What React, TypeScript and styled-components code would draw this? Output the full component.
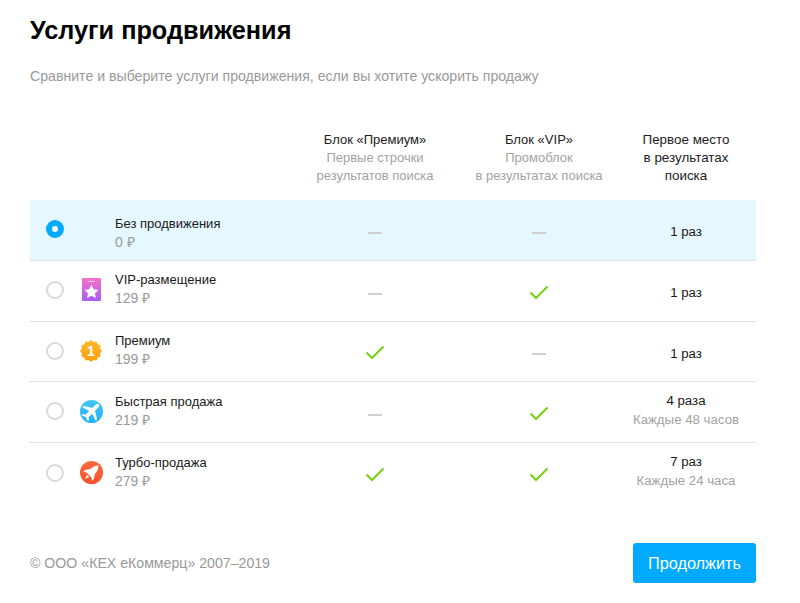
import React from "react";
import styled, { createGlobalStyle } from "styled-components";

const Global = createGlobalStyle`
  html, body { margin: 0; padding: 0; background: #fff; }
  body { font-family: "Liberation Sans", Arial, sans-serif; color: #000; }
`;

const Page = styled.div`
  width: 726px;
  height: 603px;
  padding: 0 44px 0 30px;
  display: flex;
  flex-direction: column;
  overflow: hidden;
`;
const Title = styled.h1`
  margin: 15px 0 0;
  font-size: 25.3px;
  line-height: 30px;
  font-weight: 700;
  color: #000;
`;
const Subtitle = styled.p`
  margin: 22px 0 0;
  font-size: 14.14px;
  line-height: 18px;
  color: #999;
`;
const Columns = "263px 164px 164px 130px 5px";
const Header = styled.div`
  margin-top: 46px;
  display: grid;
  grid-template-columns: ${Columns};
  height: 69px;
  border-bottom: 1px solid #e5e5e5;
  margin-bottom: -1px;
`;
const HeadCell = styled.div<{ $wide?: boolean }>`
  text-align: center;
  font-size: ${(p) => (p.$wide ? "13.4px" : "13px")};
  line-height: 18px;
  color: #222;
`;
const HeadMuted = styled.div`
  color: #a3a3a3;
`;
const Row = styled.div<{ $active?: boolean }>`
  display: grid;
  grid-template-columns: ${Columns};
  align-items: center;
  box-sizing: border-box;
  height: 60.75px;
  border-bottom: 1px solid #e0e0e0;
  background: ${(p) => (p.$active ? "#e5f7ff" : "#fff")};
  &:last-child { border-bottom: none; }
`;
const Service = styled.div`
  display: flex;
  align-items: center;
  padding-left: 16px;
`;
const Radio = styled.span<{ $active?: boolean }>`
  width: 18px;
  height: 18px;
  box-sizing: border-box;
  border-radius: 50%;
  border: ${(p) => (p.$active ? "6px solid #00aaff" : "2px solid #d9d9d9")};
  background: #fff;
  margin-top: -1.5px;
  flex: none;
`;
const IconSlot = styled.span`
  width: 24px;
  height: 24px;
  margin-left: 15px;
  margin-top: -1.5px;
  flex: none;
  display: flex;
  align-items: center;
  justify-content: center;
`;
const Info = styled.div<{ $plain?: boolean }>`
  margin-left: 12px;
  margin-top: ${(p) => (p.$plain ? "6px" : "-2.5px")};
`;
const Name = styled.div`
  font-size: 13px;
  line-height: 18px;
  color: #1a1a1a;
`;
const Price = styled.div`
  font-size: 14px;
  line-height: 18px;
  color: #999;
`;
const Cell = styled.div`
  display: flex;
  align-items: center;
  justify-content: center;
  padding-top: 3px;
`;
const Dash = styled.span`
  width: 14px;
  height: 2px;
  margin-top: 3px;
  background: #cfcfcf;
`;
const Count = styled.div<{ $hasNote?: boolean }>`
  text-align: center;
  font-size: 13.25px;
  line-height: ${(p) => (p.$hasNote ? "19px" : "18px")};
  color: #1a1a1a;
  padding: ${(p) => (p.$hasNote ? "0 0 5px" : "5px 0 0")};
`;
const CountNote = styled.div`
  color: #a3a3a3;
`;
const Footer = styled.div`
  margin-top: 39.25px;
  display: flex;
  align-items: center;
  justify-content: space-between;
`;
const Copyright = styled.span`
  font-size: 14.15px;
  color: #999;
`;
const Continue = styled.button`
  width: 123px;
  height: 40px;
  border: none;
  border-radius: 3px;
  background: #00aaff;
  color: #fff;
  font-family: inherit;
  font-size: 16.3px;
  padding: 0;
`;

const Check = () => (
  <svg width="20" height="15" viewBox="0 0 20 15" fill="none">
    <path d="M1.5 7.5 L7 13 L18.5 1.5" stroke="#73d216" strokeWidth="2" />
  </svg>
);

const VipIcon = () => (
  <svg width="19" height="23" viewBox="0 0 19 23">
    <defs>
      <linearGradient id="vipg" x1="0" y1="0" x2="0" y2="1">
        <stop offset="0" stopColor="#f472c6" />
        <stop offset="1" stopColor="#a95cf5" />
      </linearGradient>
    </defs>
    <rect x="0" y="0" width="19" height="23" rx="1" fill="url(#vipg)" />
    <rect x="6.5" y="3" width="6" height="1" fill="#fbd5ef" />
    <path d="M9.5 7 L11.7 11.3 L16.5 12 L13 15.3 L13.8 20 L9.5 17.8 L5.2 20 L6 15.3 L2.5 12 L7.3 11.3 Z" fill="#fff" />
  </svg>
);

const burst = (() => {
  const pts: string[] = [];
  const n = 12;
  for (let i = 0; i < n * 2; i++) {
    const r = i % 2 === 0 ? 11 : 9.4;
    const a = (Math.PI * i) / n - Math.PI / 2;
    pts.push(`${(11 + r * Math.cos(a)).toFixed(2)},${(11 + r * Math.sin(a)).toFixed(2)}`);
  }
  return pts.join(" ");
})();

const PremiumIcon = () => (
  <svg width="22" height="22" viewBox="0 0 22 22">
    <defs>
      <linearGradient id="premg" x1="0" y1="0" x2="0" y2="1">
        <stop offset="0" stopColor="#ffb92b" />
        <stop offset="1" stopColor="#ff9d0a" />
      </linearGradient>
    </defs>
    <polygon points={burst} fill="url(#premg)" />
    <text x="11" y="16" textAnchor="middle" fontSize="14" fontWeight="700" fontFamily="Liberation Sans, sans-serif" fill="#fff">1</text>
  </svg>
);

const FastIcon = () => (
  <svg width="23" height="23" viewBox="0 0 23 23">
    <defs>
      <linearGradient id="fastg" x1="0" y1="0" x2="0" y2="1">
        <stop offset="0" stopColor="#45c6f5" />
        <stop offset="1" stopColor="#1fb0ff" />
      </linearGradient>
    </defs>
    <circle cx="11.5" cy="11.5" r="11.5" fill="url(#fastg)" />
    <g transform="rotate(45 11.5 11.5)">
      <path d="M11.5 1 C12.9 1 13.5 3 13.5 5 V8.6 L21 13 V15 L13.5 12.8 V17.6 L15.8 19.4 V21 L11.5 19.8 L7.2 21 V19.4 L9.5 17.6 V12.8 L2 15 V13 L9.5 8.6 V5 C9.5 3 10.1 1 11.5 1 Z" fill="#fff" />
    </g>
  </svg>
);

const TurboIcon = () => (
  <svg width="23" height="23" viewBox="0 0 23 23">
    <defs>
      <linearGradient id="turbog" x1="0" y1="0" x2="0" y2="1">
        <stop offset="0" stopColor="#fb6a3c" />
        <stop offset="1" stopColor="#f5512a" />
      </linearGradient>
    </defs>
    <circle cx="11.5" cy="11.5" r="11.5" fill="url(#turbog)" />
    <g transform="rotate(45 11.5 11.5)">
      <path d="M11.5 1.5 C13.8 4 14.9 7 14.9 10 L17.8 14.4 V16.8 L14.6 15 H8.4 L5.2 16.8 V14.4 L8.1 10 C8.1 7 9.2 4 11.5 1.5 Z M9.9 16.2 H13.1 L11.5 20.5 Z" fill="#fff" />
    </g>
  </svg>
);

type Svc = {
  name: string;
  price: number;
  icon?: React.ReactNode;
  premium: boolean;
  vip: boolean;
  count: string;
  note?: string;
  active?: boolean;
};

const services: Svc[] = [
  { name: "Без продвижения", price: 0, premium: false, vip: false, count: "1 раз", active: true },
  { name: "VIP-размещение", price: 129, icon: <VipIcon />, premium: false, vip: true, count: "1 раз" },
  { name: "Премиум", price: 199, icon: <PremiumIcon />, premium: true, vip: false, count: "1 раз" },
  { name: "Быстрая продажа", price: 219, icon: <FastIcon />, premium: false, vip: true, count: "4 раза", note: "Каждые 48 часов" },
  { name: "Турбо-продажа", price: 279, icon: <TurboIcon />, premium: true, vip: true, count: "7 раз", note: "Каждые 24 часа" },
];

export default function App() {
  return (
    <Page>
      <Global />
      <Title>Услуги продвижения</Title>
      <Subtitle>Сравните и выберите услуги продвижения, если вы хотите ускорить продажу</Subtitle>
      <Header>
        <div />
        <HeadCell>
          Блок «Премиум»
          <HeadMuted>Первые строчки<br />результатов поиска</HeadMuted>
        </HeadCell>
        <HeadCell>
          Блок «VIP»
          <HeadMuted>Промоблок<br />в результатах поиска</HeadMuted>
        </HeadCell>
        <HeadCell $wide>Первое место<br />в результатах<br />поиска</HeadCell>
        <div />
      </Header>
      <div>
        {services.map((s) => (
          <Row key={s.name} $active={s.active}>
            <Service>
              <Radio $active={s.active} />
              <IconSlot>{s.icon}</IconSlot>
              <Info $plain={!s.icon}>
                <Name>{s.name}</Name>
                <Price>{s.price} ₽</Price>
              </Info>
            </Service>
            <Cell>{s.premium ? <Check /> : <Dash />}</Cell>
            <Cell>{s.vip ? <Check /> : <Dash />}</Cell>
            <Count $hasNote={!!s.note}>
              {s.count}
              {s.note && <CountNote>{s.note}</CountNote>}
            </Count>
            <div />
          </Row>
        ))}
      </div>
      <Footer>
        <Copyright>© ООО «КЕХ еКоммерц» 2007–2019</Copyright>
        <Continue>Продолжить</Continue>
      </Footer>
    </Page>
  );
}
